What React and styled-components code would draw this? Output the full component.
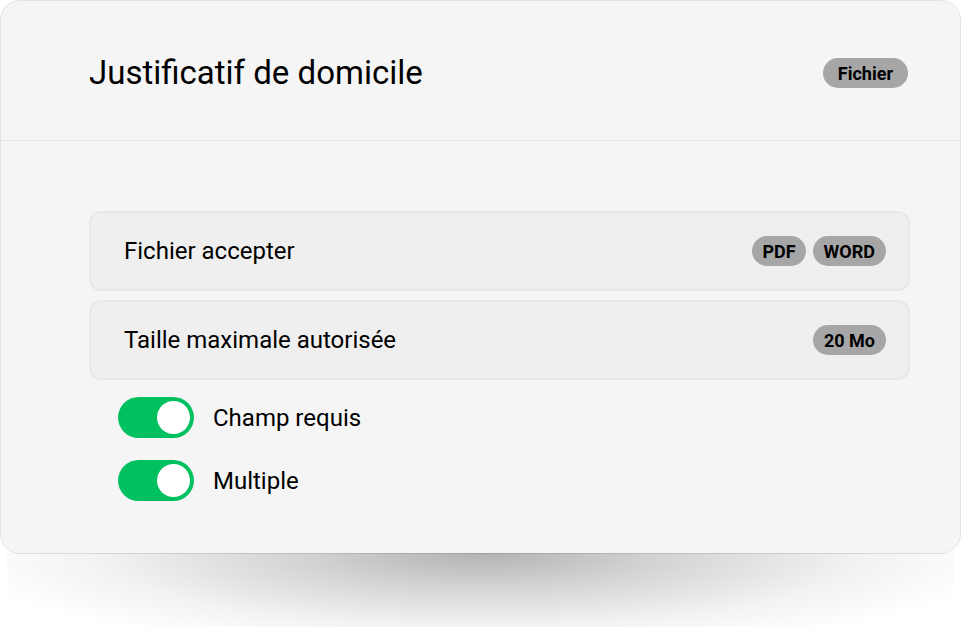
import React from "react";
import styled, { createGlobalStyle } from "styled-components";

const Global = createGlobalStyle`
  html, body { margin: 0; padding: 0; background: #ffffff; }
  body { font-family: Roboto, "Noto Sans", "Liberation Sans", sans-serif; color: #000; }
  * { box-sizing: border-box; }
`;

const Page = styled.div`
  position: relative;
  width: 961px;
  height: 627px;
  overflow: hidden;
`;

const Card = styled.section`
  position: relative;
  width: 961px;
  background: #f5f5f5;
  border: 1px solid #e3e3e3;
  border-radius: 20px;

  &::after {
    content: "";
    position: absolute;
    left: 6px;
    right: 6px;
    top: 100%;
    height: 80px;
    background: radial-gradient(ellipse 56% 125% at 50% 0%, rgba(0,0,0,0.30) 0%, rgba(0,0,0,0.17) 35%, rgba(0,0,0,0.05) 72%, rgba(0,0,0,0) 100%);
    pointer-events: none;
  }
`;

const Header = styled.header`
  height: 140px;
  display: flex;
  align-items: center;
  justify-content: space-between;
  padding: 5px 52px 0 88px;
  border-bottom: 1px solid #e4e4e4;
`;

const Title = styled.h1`
  margin: 0 0 2px;
  font-size: 33px;
  font-weight: 400;
  letter-spacing: 0;
`;

const Badge = styled.span`
  display: inline-flex;
  align-items: center;
  height: 30px;
  padding: 0 ${(p) => p.$pad || 12}px;
  border-radius: 15px;
  background: #a6a6a6;
  font-size: 18px;
  font-weight: 700;
  color: #000;
`;

const Body = styled.div`
  padding: 70px 50px 52px 88px;
  display: flex;
  flex-direction: column;
`;

const Rows = styled.div`
  display: flex;
  flex-direction: column;
  gap: 9px;
`;

const Row = styled.div`
  height: 80px;
  display: flex;
  align-items: center;
  justify-content: space-between;
  padding: 0 22px 0 33px;
  background: #efefef;
  border: 2px solid #e8e8e8;
  border-radius: 12px;
`;

const RowLabel = styled.span`
  font-size: 24px;
  font-weight: 400;
`;

const Tags = styled.div`
  display: flex;
  gap: 7px;
`;

const Toggles = styled.div`
  margin-top: 17px;
  padding-left: 29px;
  display: flex;
  flex-direction: column;
  gap: 22px;
`;

const ToggleRow = styled.label`
  display: flex;
  align-items: center;
  gap: 19px;
  font-size: 24px;
  line-height: 28px;
`;

const Switch = styled.span`
  position: relative;
  width: 76px;
  height: 41px;
  border-radius: 21px;
  background: ${(p) => (p.$on ? "#00c060" : "#cccccc")};
  flex: none;

  &::after {
    content: "";
    position: absolute;
    top: 4px;
    ${(p) => (p.$on ? "right: 4px;" : "left: 4px;")}
    width: 33px;
    height: 33px;
    border-radius: 50%;
    background: #ffffff;
  }
`;

export default function App() {
  return (
    <Page>
      <Global />
      <Card>
        <Header>
          <Title>Justificatif de domicile</Title>
          <Badge $pad={15}>Fichier</Badge>
        </Header>
        <Body>
          <Rows>
            <Row>
              <RowLabel>Fichier accepter</RowLabel>
              <Tags>
                <Badge $pad={10}>PDF</Badge>
                <Badge $pad={11}>WORD</Badge>
              </Tags>
            </Row>
            <Row>
              <RowLabel>Taille maximale autorisée</RowLabel>
              <Tags>
                <Badge $pad={11}>20 Mo</Badge>
              </Tags>
            </Row>
          </Rows>
          <Toggles>
            <ToggleRow>
              <Switch $on />
              Champ requis
            </ToggleRow>
            <ToggleRow>
              <Switch $on />
              Multiple
            </ToggleRow>
          </Toggles>
        </Body>
      </Card>
    </Page>
  );
}
